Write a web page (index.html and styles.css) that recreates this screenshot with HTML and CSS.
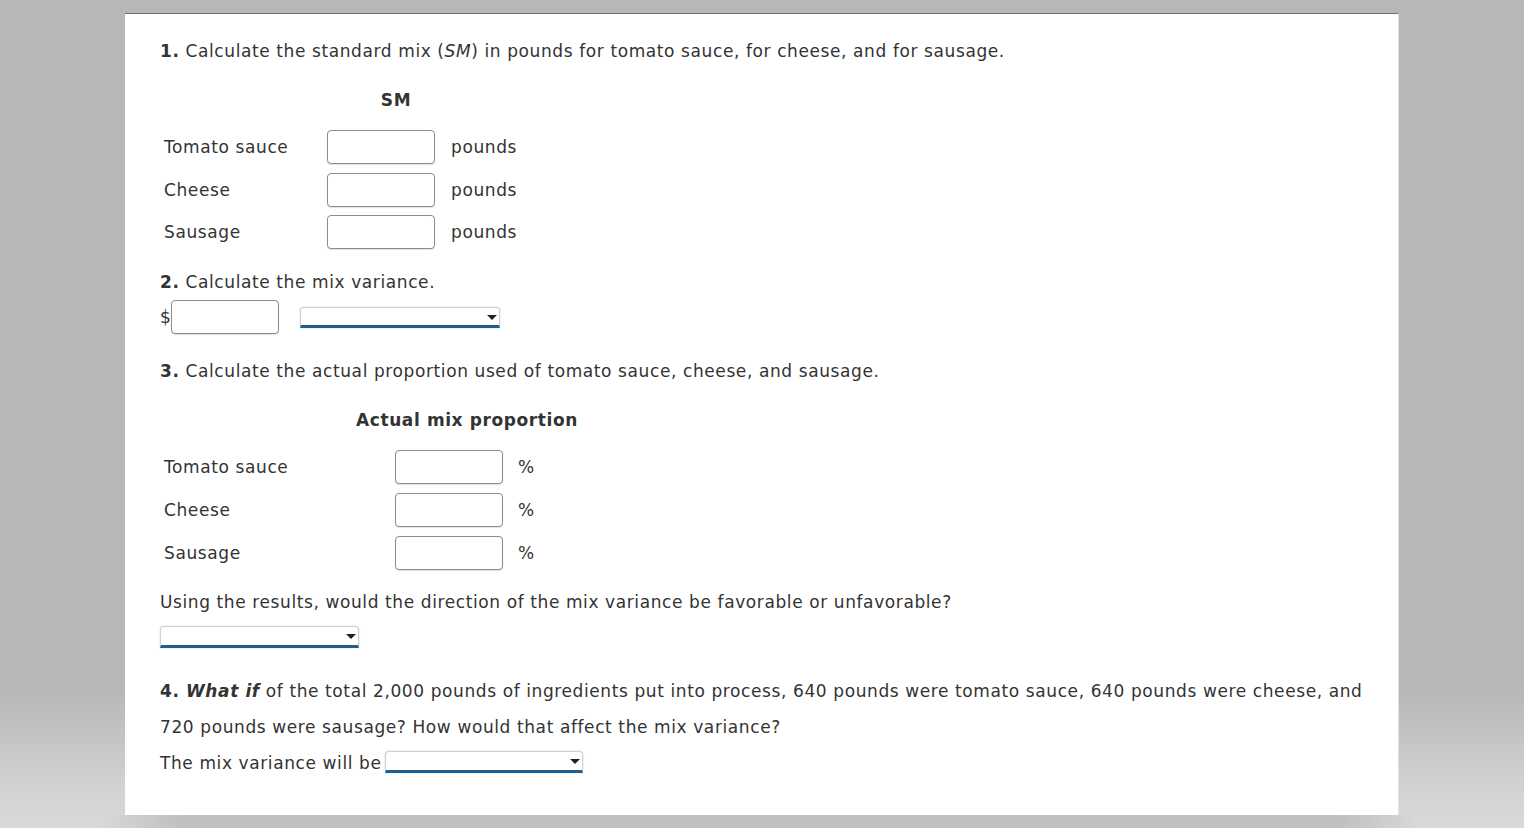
FILE: index.html
```html
<!DOCTYPE html>
<html>
<head>
<meta charset="utf-8">
<link rel="stylesheet" href="styles.css">
</head>
<body>
<div class="page">
  <div class="panel">
    <p class="q q1"><b>1.</b> Calculate the standard mix (<i>SM</i>) in pounds for tomato sauce, for cheese, and for sausage.</p>

    <div class="tbl tbl-sm">
      <div class="hdr">SM</div>
      <div class="row"><span class="lbl">Tomato sauce</span><span class="inp"></span><span class="unit">pounds</span></div>
      <div class="row"><span class="lbl">Cheese</span><span class="inp"></span><span class="unit">pounds</span></div>
      <div class="row"><span class="lbl">Sausage</span><span class="inp"></span><span class="unit">pounds</span></div>
    </div>

    <p class="q q2"><b>2.</b> Calculate the mix variance.</p>
    <div class="var-row">
      <span class="dollar">$</span><span class="inp"></span>
      <span class="sel sel-a"><span class="arrow"></span></span>
    </div>

    <p class="q q3"><b>3.</b> Calculate the actual proportion used of tomato sauce, cheese, and sausage.</p>

    <div class="tbl tbl-ap">
      <div class="hdr">Actual mix proportion</div>
      <div class="row"><span class="lbl">Tomato sauce</span><span class="inp"></span><span class="unit">%</span></div>
      <div class="row"><span class="lbl">Cheese</span><span class="inp"></span><span class="unit">%</span></div>
      <div class="row"><span class="lbl">Sausage</span><span class="inp"></span><span class="unit">%</span></div>
    </div>

    <p class="q q-using">Using the results, would the direction of the mix variance be favorable or unfavorable?</p>
    <div class="sel-line"><span class="sel sel-b"><span class="arrow"></span></span></div>

    <p class="q q4"><b>4. <i>What if</i></b> of the total 2,000 pounds of ingredients put into process, 640 pounds were tomato sauce, 640 pounds were cheese, and 720 pounds were sausage? How would that affect the mix variance?<br>The mix variance will be <span class="sel sel-c"><span class="arrow"></span></span></p>
  </div>
  <div class="shadow"></div>
</div>
</body>
</html>
```

FILE: styles.css
```css
html, body {
  margin: 0;
  padding: 0;
}
body {
  width: 1524px;
  height: 828px;
  overflow: hidden;
  background: linear-gradient(to bottom, #b6b7b6 0px, #b6b7b6 690px, #d3d4d2 790px, #d9dad8 828px);
  font-family: "DejaVu Sans", Verdana, sans-serif;
  letter-spacing: 0.6px;
  color: #333;
}
.page {
  padding-top: 13px;
}
.panel {
  margin-left: 125px;
  width: 1238px;
  height: 801px;
  background: #fff;
  border-top: 1px solid #707070;
  border-right: 1px solid #e2e2e2;
  padding: 0 0 0 35px;
  box-sizing: content-box;
  overflow: hidden;
}
.shadow {
  margin-left: 100px;
  width: 1320px;
  height: 13px;
  background: linear-gradient(to right, rgba(170,171,170,0) 0%, #b0b1b0 6%, #b0b1b0 94%, rgba(170,171,170,0) 100%);
  opacity: 0.6;
}
.q {
  margin: 0;
  font-size: 17px;
  line-height: 36px;
}
.q b { font-weight: bold; }
.q1 { margin-top: 19px; }

.tbl { font-size: 17px; }
.hdr {
  font-weight: bold;
  line-height: 36px;
}
.row {
  display: flex;
  align-items: center;
  height: 43px;
}
.lbl {
  padding-left: 4px;
  box-sizing: border-box;
}
.tbl-sm .hdr { margin-top: 13px; padding-left: 205px; width: 62px; text-align: center; }
.tbl-sm .hdr + .row { margin-top: 7px; }
.tbl-sm .row:last-child { height: 42px; }
.tbl-sm .lbl { width: 167px; }
.tbl-sm .inp { margin-right: 16px; }

.tbl-ap .hdr { margin-top: 13px; padding-left: 196px; }
.tbl-ap .hdr + .row { margin-top: 7px; }
.tbl-ap .lbl { width: 235px; }
.tbl-ap .inp { margin-right: 15px; }

.inp {
  display: inline-block;
  width: 108px;
  height: 34px;
  box-sizing: border-box;
  border: 1px solid #8c8c8c;
  border-radius: 4px;
  background: #fff;
  box-shadow: 0 1px 1px rgba(0,0,0,0.12);
}

.q2 { margin-top: 11px; }
.var-row {
  display: flex;
  align-items: center;
  height: 34px;
  margin-top: 0;
  font-size: 17px;
}
.dollar { width: 11px; }
.var-row .sel { margin-left: 21px; margin-top: 0px; height: 21px; }

.q3 { margin-top: 19px; }
.q-using { margin-top: 10px; }

.sel-line {
  margin-top: 6px;
  height: 22px;
}
.sel {
  display: inline-block;
  position: relative;
  width: 199px;
  height: 22px;
  box-sizing: border-box;
  background: #fff;
  border: 1px solid #d0d0d0;
  border-bottom: 3px solid #1f5f8b;
  border-radius: 4px 4px 0 0;
  box-shadow: 0 0 2px rgba(0,0,0,0.18);
  vertical-align: middle;
}
.sel-a { width: 200px; }
.sel-c { width: 198px; margin-left: -3px; margin-top: -4px; }
.arrow {
  position: absolute;
  right: 2px;
  top: 7px;
  width: 0;
  height: 0;
  border-left: 5px solid transparent;
  border-right: 5px solid transparent;
  border-top: 5px solid #222;
}
.q4 { margin-top: 25px; margin-left: 0; }
```
